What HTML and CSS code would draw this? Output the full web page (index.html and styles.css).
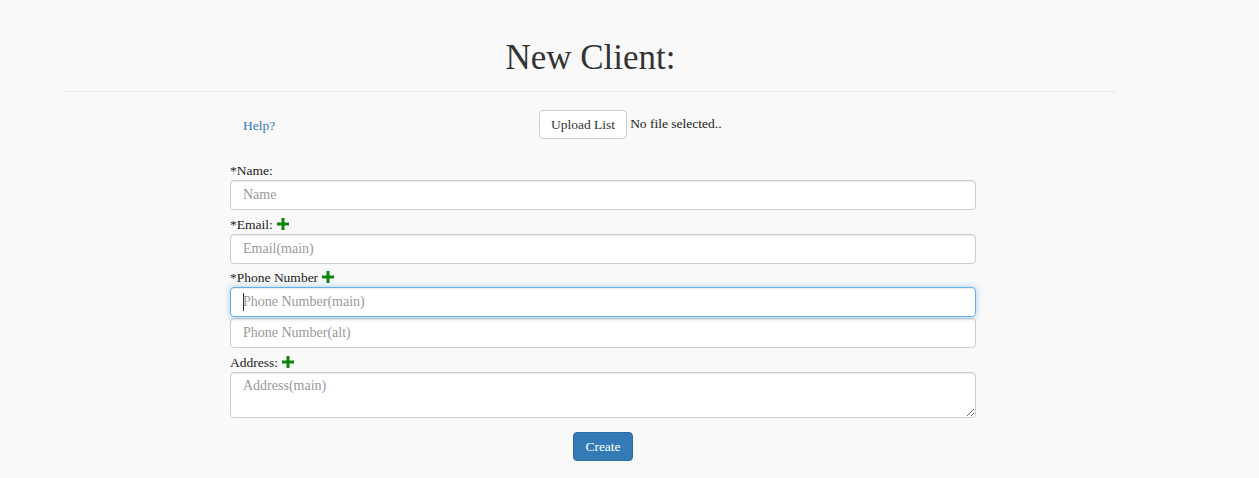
FILE: index.html
```html
<!DOCTYPE html>
<html>
<head>
<meta charset="utf-8">
<link rel="stylesheet" href="styles.css">
</head>
<body>
<div class="page">
  <h1 class="title">New Client:</h1>
  <hr class="rule">
  <form class="form">
    <div class="toprow">
      <div class="help-cell"><a class="help" href="#">Help?</a></div>
      <div class="upload-cell">
        <span class="btn">Upload List</span>
        <span class="nofile">No file selected..</span>
      </div>
    </div>
    <div class="group">
      <label class="label">*Name:</label>
      <input class="input" placeholder="Name">
    </div>
    <div class="group">
      <label class="label">*Email: <svg class="plus" viewBox="0 0 12 12"><path d="M4.5 0h3v4.5H12v3H7.5V12h-3V7.5H0v-3h4.5z"/></svg></label>
      <input class="input" placeholder="Email(main)">
    </div>
    <div class="group group-tight">
      <label class="label">*Phone Number <svg class="plus" viewBox="0 0 12 12"><path d="M4.5 0h3v4.5H12v3H7.5V12h-3V7.5H0v-3h4.5z"/></svg></label>
      <div class="focus-wrap"><input class="input focused" placeholder="Phone Number(main)"></div>
      <input class="input" placeholder="Phone Number(alt)">
    </div>
    <div class="group">
      <label class="label">Address: <svg class="plus" viewBox="0 0 12 12"><path d="M4.5 0h3v4.5H12v3H7.5V12h-3V7.5H0v-3h4.5z"/></svg></label>
      <textarea class="input textarea" placeholder="Address(main)"></textarea>
    </div>
    <div class="actions">
      <span class="btn btn-primary">Create</span>
    </div>
  </form>
</div>
</body>
</html>
```
FILE: styles.css
```css
* { box-sizing: border-box; }
html, body { margin: 0; padding: 0; }
body {
  background: #f9f9f9;
  font-family: "Liberation Serif", serif;
  font-size: 13.5px;
  color: #222;
  width: 1259px;
  height: 478px;
  overflow: hidden;
}
.page {
  width: 1053px;
  margin-left: 64px;
}
.title {
  margin: 0;
  padding-top: 38px;
  font-size: 35px;
  line-height: 40px;
  font-weight: normal;
  text-align: center;
  color: #333;
}
.rule {
  margin: 13px 0 0;
  border: 0;
  border-top: 1px solid #eaeaea;
  height: 0;
}
.form {
  width: 746px;
  margin-left: 166px;
}
.toprow {
  display: grid;
  grid-template-columns: 309px 1fr;
  align-items: center;
  margin-top: 18px;
  height: 29px;
}
.help-cell { padding-left: 13px; padding-top: 3px; }
.help { color: #337ab7; text-decoration: none; }
.upload-cell { display: flex; align-items: center; gap: 3px; }
.nofile { margin-top: -2px; }
.btn {
  display: inline-flex;
  align-items: center;
  justify-content: center;
  height: 29px;
  padding: 0 11px;
  background: #fff;
  border: 1px solid #ccc;
  border-radius: 4px;
  color: #333;
}
.btn-primary {
  background: #337ab7;
  border-color: #2e6da4;
  color: #fff;
  width: 60px;
  padding: 0;
}
.group { margin-top: 24px; }
.group + .group { margin-top: 7px; }
.group + .group-tight { margin-top: 6px; }
.label {
  display: flex;
  align-items: center;
  gap: 3px;
  height: 16px;
  line-height: 16px;
  margin-bottom: 1px;
}
.plus { width: 12px; height: 12px; fill: #0a840a; margin-left: 1px; margin-top: -2px; }
.input {
  display: block;
  width: 100%;
  height: 30px;
  padding: 6px 12px;
  font-family: "Liberation Serif", serif;
  font-size: 14px;
  color: #555;
  background: #fff;
  border: 1px solid #ccc;
  border-radius: 4px;
  box-shadow: inset 0 1px 1px rgba(0,0,0,.075);
  outline: none;
}
.input::placeholder { color: #999; }
.focus-wrap { position: relative; margin-bottom: 1px; }
.focus-wrap::before {
  content: "";
  position: absolute;
  left: 13px;
  top: 6px;
  width: 1px;
  height: 18px;
  background: #333;
}
.focused {
  border-color: #66afe9;
  box-shadow: inset 0 1px 1px rgba(0,0,0,.075), 0 0 6px rgba(102,175,233,.6);
}
.textarea {
  height: 46px;
  resize: vertical;
  padding-top: 5px;
}
.actions {
  display: flex;
  justify-content: center;
  margin-top: 14px;
}
```
